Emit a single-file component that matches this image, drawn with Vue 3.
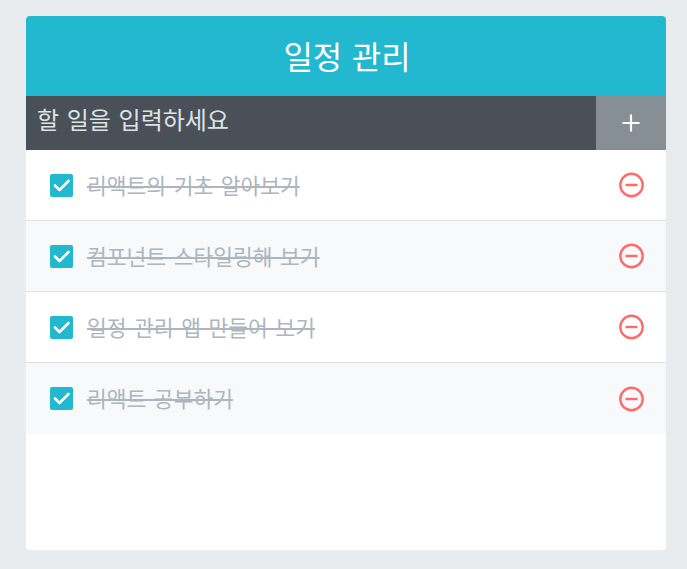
<script setup>
import { ref } from 'vue';

const todos = ref([
  { id: 1, text: '리액트의 기초 알아보기' },
  { id: 2, text: '컴포넌트 스타일링해 보기' },
  { id: 3, text: '일정 관리 앱 만들어 보기' },
  { id: 4, text: '리액트 공부하기' },
]);
</script>

<template>
  <div class="page">
    <div class="template">
      <div class="title">일정 관리</div>
      <form class="insert" @submit.prevent>
        <input class="insert-input" placeholder="할 일을 입력하세요" />
        <button class="insert-btn" type="button" aria-label="추가">
          <svg width="22" height="22" viewBox="0 0 22 22">
            <path d="M11 2.5v17M2.5 11h17" stroke="#fff" stroke-width="2.2" fill="none" />
          </svg>
        </button>
      </form>
      <div class="list">
        <div v-for="todo in todos" :key="todo.id" class="item">
          <div class="checkbox">
            <span class="check">
              <svg width="23" height="23" viewBox="0 0 23 23">
                <path d="M5 11.5l4.5 4.5L18.5 7" stroke="#fff" stroke-width="2.6" fill="none" stroke-linecap="round" stroke-linejoin="round" />
              </svg>
            </span>
            <span class="text">{{ todo.text }}</span>
          </div>
          <div class="remove">
            <svg width="26" height="26" viewBox="0 0 26 26">
              <circle cx="13.5" cy="13" r="11.2" stroke="#ff6b6b" stroke-width="2.4" fill="none" />
              <path d="M7.5 13h12" stroke="#ff6b6b" stroke-width="2.4" fill="none" />
            </svg>
          </div>
        </div>
      </div>
    </div>
  </div>
</template>

<style>
html, body {
  margin: 0;
  background: #e9ecef;
}
</style>

<style scoped>
.page {
  height: 569px;
  padding-top: 16px;
  box-sizing: border-box;
  font-family: Roboto, "Noto Sans CJK KR", sans-serif;
}
.template {
  width: 640px;
  margin-left: 26px;
  border-radius: 4px;
  overflow: hidden;
  background: #fff;
}
.title {
  height: 80px;
  background: #22b8cf;
  color: #fff;
  font-size: 32px;
  word-spacing: 1.5px;
  display: flex;
  align-items: center;
  justify-content: center;
  padding-left: 2px;
  padding-bottom: 3px;
  box-sizing: border-box;
}
.insert {
  display: flex;
  height: 54px;
  background: #495057;
}
.insert-input {
  flex: 1;
  min-width: 0;
  background: none;
  border: none;
  outline: none;
  padding: 8px 11px;
  font-family: inherit;
  font-size: 24px;
  word-spacing: 1.7px;
  line-height: 1.5;
  color: #fff;
  align-self: flex-start;
  height: 50px;
  box-sizing: border-box;
}
.insert-input::placeholder {
  color: #dee2e6;
}
.insert-btn {
  width: 70px;
  border: none;
  padding: 0;
  background: #868e96;
  display: flex;
  align-items: center;
  justify-content: center;
}
.list {
  height: 400px;
}
.item {
  display: flex;
  align-items: center;
  padding: 16px;
  height: 71px;
  box-sizing: border-box;
  border-bottom: 1px solid #dee2e6;
}
.item:nth-child(even) {
  background: #f8f9fa;
}
.item:last-child {
  border-bottom: none;
}
.checkbox {
  flex: 1;
  display: flex;
  align-items: center;
  padding-left: 8px;
}
.check {
  width: 23px;
  height: 23px;
  border-radius: 2px;
  background: #22b8cf;
  display: flex;
}
.text {
  margin-left: 14px;
  margin-bottom: 2px;
  font-size: 21.5px;
  word-spacing: 2.2px;
  color: #adb5bd;
  text-decoration: line-through;
}
.remove {
  display: flex;
  margin-right: 6px;
}
</style>
